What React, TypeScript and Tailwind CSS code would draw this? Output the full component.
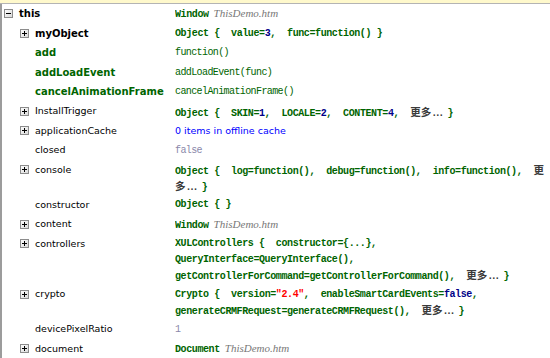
import React from 'react';

type Row = {
  name: string;
  level: 0 | 1;
  toggle?: 'plus' | 'minus';
  nameStyle?: 'black' | 'green' | 'plain';
  lines: React.ReactNode[];
};

const mono = "font-['Liberation_Mono',monospace] text-[10px] whitespace-pre";
const sans = "font-['DejaVu_Sans',sans-serif] text-[9.5px]";

const G = ({ children }: { children: React.ReactNode }) => (
  <span className="text-[#006400] font-bold tracking-[-0.4px]">{children}</span>
);
const Num = ({ children }: { children: React.ReactNode }) => (
  <span className="text-[#000088] font-bold tracking-[-0.4px]">{children}</span>
);
const Str = ({ children }: { children: React.ReactNode }) => (
  <span className="text-[#ff0000] font-bold tracking-[-0.4px]">{children}</span>
);
const More = () => (
  <span className="text-[#3a3a3a]">
    <span className="font-['Noto_Sans_CJK_SC',sans-serif] text-[10.5px] font-bold">更多</span>
    <span className="font-bold tracking-[-2.5px]">...</span>
  </span>
);
const Path = () => (
  <span className="ml-[5px] font-['Liberation_Serif',serif] italic text-[11px] text-[#777] tracking-normal">ThisDemo.htm</span>
);
const Fn = ({ children }: { children: React.ReactNode }) => (
  <span className="text-[#006400] tracking-[-0.6px]">{children}</span>
);

const rows: Row[] = [
  {
    name: 'this', level: 0, toggle: 'minus', nameStyle: 'black',
    lines: [<><G>Window</G><Path /></>],
  },
  {
    name: 'myObject', level: 1, toggle: 'plus', nameStyle: 'black',
    lines: [<><G>Object {'{'}  value=</G><Num>3</Num><G>,  func=function() {'}'}</G></>],
  },
  { name: 'add', level: 1, nameStyle: 'green', lines: [<Fn>function()</Fn>] },
  { name: 'addLoadEvent', level: 1, nameStyle: 'green', lines: [<Fn>addLoadEvent(func)</Fn>] },
  { name: 'cancelAnimationFrame', level: 1, nameStyle: 'green', lines: [<Fn>cancelAnimationFrame()</Fn>] },
  {
    name: 'InstallTrigger', level: 1, toggle: 'plus',
    lines: [<><G>Object {'{'}  SKIN=</G><Num>1</Num><G>,  LOCALE=</G><Num>2</Num><G>,  CONTENT=</G><Num>4</Num><G>,  </G><More /><G> {'}'}</G></>],
  },
  {
    name: 'applicationCache', level: 1, toggle: 'plus',
    lines: [<span className={`${sans} text-[#0000ff]`}>0 items in offline cache</span>],
  },
  { name: 'closed', level: 1, lines: [<span className="text-[#8a88aa] tracking-[-0.6px]">false</span>] },
  {
    name: 'console', level: 1, toggle: 'plus',
    lines: [
      <><G>Object {'{'}  log=function(),  debug=function(),  info=function(),  </G><span className="font-['Noto_Sans_CJK_SC',sans-serif] text-[10.5px] font-bold text-[#3a3a3a]">更</span></>,
      <><span className="font-['Noto_Sans_CJK_SC',sans-serif] text-[10.5px] font-bold text-[#3a3a3a]">多</span><span className="font-bold tracking-[-2.5px] text-[#3a3a3a]">...</span><G> {'}'}</G></>,
    ],
  },
  { name: 'constructor', level: 1, lines: [<G>Object {'{'} {'}'}</G>] },
  { name: 'content', level: 1, toggle: 'plus', lines: [<><G>Window</G><Path /></>] },
  {
    name: 'controllers', level: 1, toggle: 'plus',
    lines: [
      <G>XULControllers {'{'}  constructor={'{'}...{'}'},</G>,
      <G>QueryInterface=QueryInterface(),</G>,
      <><G>getControllerForCommand=getControllerForCommand(),  </G><More /><G> {'}'}</G></>,
    ],
  },
  {
    name: 'crypto', level: 1, toggle: 'plus',
    lines: [
      <><G>Crypto {'{'}  version=</G><Str>"2.4"</Str><G>,  enableSmartCardEvents=</G><Num>false</Num><G>,</G></>,
      <><G>generateCRMFRequest=generateCRMFRequest(),  </G><More /><G> {'}'}</G></>,
    ],
  },
  { name: 'devicePixelRatio', level: 1, lines: [<span className="text-[#8a88aa] tracking-[-0.6px]">1</span>] },
  { name: 'document', level: 1, toggle: 'plus', lines: [<><G>Document</G><Path /></>] },
];

const Toggle = ({ kind }: { kind: 'plus' | 'minus' }) => (
  <svg width="9" height="9" viewBox="0 0 9 9" className="shrink-0 mr-[6px]">
    <defs>
      <linearGradient id={`tg-${kind}`} x1="0" y1="0" x2="1" y2="1">
        <stop offset="0" stopColor="#ffffff" />
        <stop offset="1" stopColor="#d8d8d8" />
      </linearGradient>
    </defs>
    <rect x="0.5" y="0.5" width="8" height="8" fill={`url(#tg-${kind})`} stroke="#8c8c8c" />
    <rect x="2" y="4" width="5" height="1" fill="#000" />
    {kind === 'plus' && <rect x="4" y="2" width="1" height="5" fill="#000" />}
  </svg>
);

const DomRow = ({ row }: { row: Row }) => {
  const pad = row.level === 0 ? 'pl-[2px]' : row.toggle ? 'pl-[18px]' : 'pl-[33px]';
  const nameCls =
    row.nameStyle === 'black'
      ? 'font-bold text-black text-[10px]'
      : row.nameStyle === 'green'
      ? 'font-bold text-[#006400] text-[10px]'
      : 'text-black text-[9.5px]';
  return (
    <div className="flex items-start py-[2px]">
      <div className={`w-[173px] shrink-0 flex items-center h-[15.5px] ${pad}`}>
        {row.toggle && <Toggle kind={row.toggle} />}
        <span className={`font-['DejaVu_Sans',sans-serif] whitespace-nowrap ${nameCls}`}>{row.name}</span>
      </div>
      <div className={`flex-1 min-w-0 ${mono}`}>
        {row.lines.map((l, i) => (
          <div key={i} className="h-[15.5px] leading-[15.5px] whitespace-pre overflow-hidden">
            {l}
          </div>
        ))}
      </div>
    </div>
  );
};

export default function App() {
  return (
    <div className="w-[550px] h-[358px] bg-white overflow-hidden flex flex-col">
      <div className="h-[4px] shrink-0 bg-[#fff9cc] border-b border-[#b4b4b4]" />
      <div className="flex-1 border-l-2 border-[#9c9c9c]">
        {rows.map((r) => (
          <DomRow key={r.name} row={r} />
        ))}
      </div>
    </div>
  );
}
